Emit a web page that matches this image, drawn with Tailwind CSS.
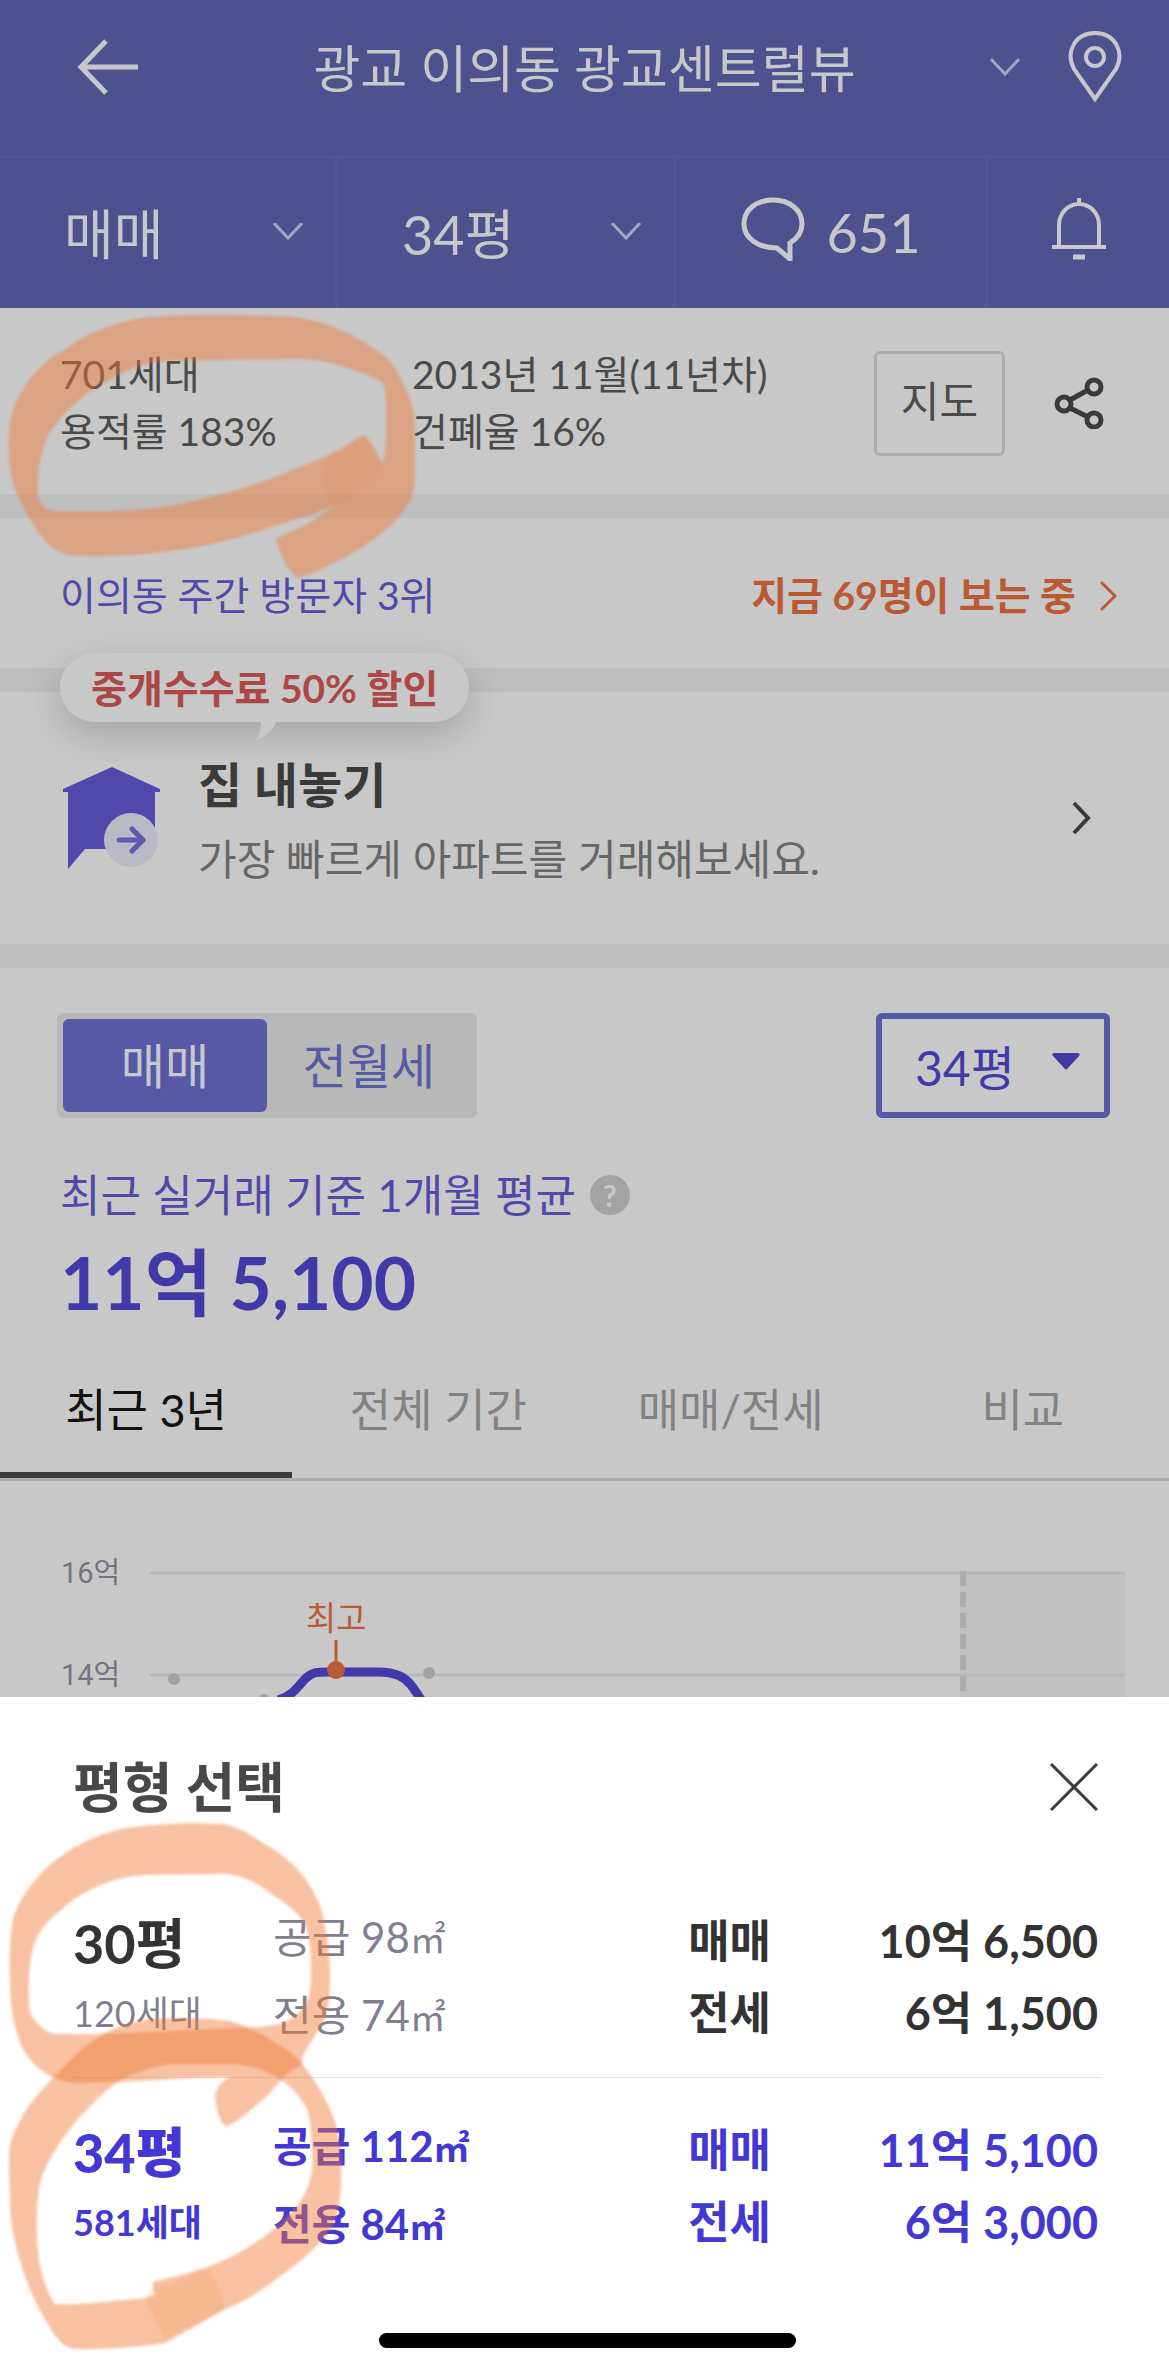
<!DOCTYPE html>
<html lang="ko">
<head>
<meta charset="utf-8">
<meta name="viewport" content="width=device-width, initial-scale=1">
<title>광교센트럴뷰</title>
<script src="https://cdn.jsdelivr.net/npm/@tailwindcss/browser@4"></script>
</head>
<body class="relative bg-white font-['Lato','Noto_Sans_CJK_KR',sans-serif] text-[39px] text-[#4a4a4a]">

<!-- App header -->
<header class="bg-[#4d518d] text-[#c8c8cc]">
  <div class="flex h-[158px] items-center border-b-3 border-[#535793] pr-[47px] pb-[22px] pl-[76px]">
    <a href="#" aria-label="뒤로" class="w-16">
      <svg class="h-[56px] w-[64px]" viewBox="0 0 64 56" fill="none" stroke="currentColor" stroke-width="5"><path d="M30 2 5 28l25 26M5 28h57"/></svg>
    </a>
    <button type="button" class="flex flex-1 items-center">
      <span class="flex-1 pt-1 pl-[39px] text-center text-[51px] leading-[76px]">광교 이의동 광교센트럴뷰</span>
      <svg class="h-[20px] w-[30px]" viewBox="0 0 30 20" fill="none" stroke="#a3a5c6" stroke-width="3"><path d="m1 2 14 15L29 2"/></svg>
    </button>
    <a href="#" aria-label="지도 위치" class="ml-[48px]">
      <svg class="h-[74px] w-[54px]" viewBox="0 0 54 74" fill="none" stroke="currentColor" stroke-width="4"><path d="M27 69 6 39C-3 22 7 3 27 3s30 19 21 36Z"/><circle cx="27" cy="27" r="9"/></svg>
    </a>
  </div>
  <div class="grid h-[150px] grid-cols-[338fr_338fr_312fr_181fr] divide-x-3 divide-[#535793] text-[54px]">
    <label class="flex items-center pr-[32px] pl-[64px]">
      <select aria-label="거래 유형" class="w-full flex-1 appearance-none pt-1 leading-[80px] outline-none"><option>매매</option><option>전월세</option></select>
      <svg class="h-[20px] w-[30px]" viewBox="0 0 30 20" fill="none" stroke="#a3a5c6" stroke-width="3"><path d="m1 0 14 15L29 0"/></svg>
    </label>
    <label class="flex items-center pr-[32px] pl-[64px]">
      <select aria-label="평형" class="w-full flex-1 appearance-none pt-1 leading-[80px] outline-none"><option>34평</option><option>30평</option></select>
      <svg class="h-[20px] w-[30px]" viewBox="0 0 30 20" fill="none" stroke="#a3a5c6" stroke-width="3"><path d="m1 0 14 15L29 0"/></svg>
    </label>
    <a href="#" class="flex items-center justify-center gap-[22px]">
      <svg class="mb-2 h-[64px] w-[64px]" viewBox="0 0 64 64" fill="none" stroke="currentColor" stroke-width="5"><path d="M32 3C15 3 3 13 3 27s14 24 33 24l13 11V46c8-5 12-11 12-19C61 13 49 3 32 3Z"/></svg>
      <span class="leading-[80px]">651</span>
    </a>
    <button type="button" aria-label="알림" class="flex items-center justify-center">
      <svg class="mb-2 h-[62px] w-[54px]" viewBox="0 0 54 62" fill="none" stroke="currentColor" stroke-width="4"><path d="M27 0v7M7 48V27a20 21 0 0 1 40 0v21M0 49h54"/><path stroke-width="5" d="M21 59h12"/></svg>
    </button>
  </div>
</header>

<main class="bg-[#c8c8c8]">
  <!-- Complex summary -->
  <section class="flex h-[186px] items-center pt-[4px] pr-[65px] pl-[60px]">
    <p class="w-[352px] leading-[57px]">701세대<br>용적률 183%</p>
    <p class="flex-1 leading-[57px]">2013년 11월(11년차)<br>건폐율 16%</p>
    <button type="button" class="h-[105px] w-[131px] rounded-md border-3 border-[#adadad] pb-1 text-[42px]">지도</button>
    <button type="button" aria-label="공유" class="ml-[49px]">
      <svg class="h-[52px] w-[50px]" viewBox="0 0 50 52" fill="none" stroke="#3a3a3a" stroke-width="5"><circle cx="10" cy="27" r="7"/><circle cx="40" cy="10" r="7"/><circle cx="40" cy="43" r="7"/><path d="m16 23 18-10M16 31l18 9"/></svg>
    </button>
  </section>

  <!-- Visitors -->
  <section class="flex h-[198px] items-center justify-between border-y-24 border-[#bebebe] pt-[5px] pr-[52px] pl-[60px]">
    <p class="text-[#5248a8]">이의동 주간 방문자 3위</p>
    <a href="#" class="flex items-center gap-[24px] font-bold text-[#b95a35]">지금 69명이 보는 중
      <svg class="h-[30px] w-[17px]" viewBox="0 0 17 30" fill="none" stroke="currentColor" stroke-width="3"><path d="m1 1 14 14L1 29"/></svg>
    </a>
  </section>

  <!-- Sell banner -->
  <section class="relative h-[276px] border-b-24 border-[#bebebe]">
    <div class="absolute -top-[39px] left-[60px] z-10 rounded-full bg-[#c8c8c8] px-[31px] pt-[2px] text-[39px] leading-[67px] font-bold text-[#ab4845] shadow-[0_12px_36px_rgb(0_0_0/0.18)]">중개수수료 50% 할인
      <svg class="absolute top-[68px] left-[196px] h-[20px] w-[21px]" viewBox="0 0 21 20" fill="#c8c8c8"><path d="M5 0h15C19 8 10 16 0 19 4 14 5 7 5 0Z"/></svg>
    </div>
    <a href="#" class="flex items-center pt-[56px] pr-[78px] pl-[62px]">
      <svg class="-mt-[6px] h-[104px] w-[98px]" viewBox="0 0 98 104"><path fill="#5248ab" d="M50 0 98 22v3h-5v57H23L6 102V25H1v-3Z"/><circle cx="69" cy="73" r="27" fill="#babac6"/><path fill="none" stroke="#5f57b0" stroke-width="5" stroke-linecap="round" stroke-linejoin="round" d="M57 73h24M70 62l11 11-11 11"/></svg>
      <div class="ml-[38px] flex-1">
        <h2 class="text-[48px] leading-[74px] font-bold text-[#3a3a3a]">집 내놓기</h2>
        <p class="text-[42px] leading-[74px] text-[#666]">가장 빠르게 아파트를 거래해보세요.</p>
      </div>
      <svg class="mb-[8px] h-[34px] w-[19px]" viewBox="0 0 19 34" fill="none" stroke="#3a3a3a" stroke-width="4"><path d="m2 2 14 15L2 32"/></svg>
    </a>
  </section>

  <!-- Price -->
  <section class="pt-[45px]">
    <div class="flex h-[105px] justify-between pr-[59px] pl-[57px] text-[48px]">
      <div class="flex w-[420px] rounded-md bg-[#b8b8b8] p-[6px]">
        <button type="button" class="w-[204px] rounded-md bg-[#565aa6] text-[#c8c8cc]">매매</button>
        <button type="button" class="flex-1 text-[#565aa3]">전월세</button>
      </div>
      <label class="flex w-[234px] items-center rounded-md border-6 border-[#565aa6] pr-[24px] pl-[33px]">
        <select aria-label="면적" class="w-full flex-1 appearance-none pt-1 leading-[80px] text-[#4239a8] outline-none"><option>34평</option><option>30평</option></select>
        <svg class="mb-2 h-[17px] w-[28px]" viewBox="0 0 28 17" fill="#4239a8"><path d="M2 0h24q3 1 1 3L15 16q-1 1-2 0L1 3Q-1 1 2 0Z"/></svg>
      </label>
    </div>
    <div class="mt-[44px] flex items-center gap-[14px] px-[60px]">
      <h3 class="text-[44px] leading-[66px] text-[#5248a8]">최근 실거래 기준 1개월 평균</h3>
      <button type="button" aria-label="도움말" class="size-[40px] rounded-full bg-[#a3a3a3] text-[30px] leading-[40px] font-bold text-[#c8c8c8]">?</button>
    </div>
    <p class="px-[60px] text-[73px] leading-[108px] font-bold text-[#4239a8]">11억 5,100</p>

    <nav class="mt-[6px] grid h-[139px] grid-cols-4 border-b-3 border-[#aeaeae] text-[45px] text-[#828282]">
      <a href="#" class="border-b-6 border-[#3b3c3a] pt-[35px] text-center leading-[66px] text-[#111]">최근 3년</a>
      <a href="#" class="pt-[35px] text-center leading-[66px]">전체 기간</a>
      <a href="#" class="pt-[35px] text-center leading-[66px]">매매/전세</a>
      <a href="#" class="pt-[35px] text-center leading-[66px]">비교</a>
    </nav>

    <!-- Price chart, cut off by the sheet -->
    <svg class="block w-full" viewBox="0 0 1169 216" role="img" aria-label="실거래가 차트">
      <rect x="960" y="91" width="165" height="125" fill="#c0c0c0"/>
      <path stroke="#b8b8b8" stroke-width="3" d="M150 92h975M150 194h975"/>
      <path stroke="#adadad" stroke-width="6" stroke-dasharray="15 6" d="M963 90v126"/>
      <g fill="#74747f" class="font-['Roboto','Noto_Sans_CJK_KR',sans-serif] text-[29px]"><text x="61" y="102">16억</text><text x="61" y="204">14억</text></g>
      <g fill="#a3a3a3"><circle cx="174" cy="198" r="6"/><circle cx="264" cy="219" r="6"/><circle cx="429" cy="192" r="6"/></g>
      <path fill="none" stroke="#4239a8" stroke-width="9" d="M278 219c15-4 20-14 28-22 8-7 12-6 30-6h41c21 0 28 6 34 13 5 6 7 11 12 17"/>
      <path stroke="#b95a35" stroke-width="3" d="M336 159v30"/>
      <circle cx="336" cy="189" r="9" fill="#b95a35"/>
      <text x="336" y="149" text-anchor="middle" fill="#b95a35" class="text-[33px]">최고</text>
    </svg>
  </section>
</main>

<!-- Size picker sheet -->
<section class="bg-white pt-[50px] pr-[67px] pl-[73px]" aria-labelledby="sheet-title">
  <div class="flex items-center justify-between pr-1">
    <h2 id="sheet-title" class="pt-[2px] text-[54px] leading-[78px] font-bold text-[#484848]">평형 선택</h2>
    <button type="button" aria-label="닫기"><svg class="h-[48px] w-[48px]" viewBox="0 0 48 48" fill="none" stroke="#3a3a3a" stroke-width="3"><path d="m1 1 46 46M47 1 1 47"/></svg></button>
  </div>
  <ul class="mt-[46px] divide-y divide-[#e2e2e2]">
    <li>
      <button type="button" class="grid h-[204px] w-full grid-cols-[200px_1fr_auto_331px] items-start pt-[26px] text-left text-[#333]">
        <span class="pt-[9px]"><strong class="block text-[54px] leading-[72px]">30평</strong><span class="block text-[36px] leading-[66px] text-[#7f7f90]">120세대</span></span>
        <span class="text-[42px] leading-[76px] text-[#7f7f90]">공급 98<span class="text-[36px]">㎡</span><br>전용 74<span class="text-[36px]">㎡</span></span>
        <span class="pt-[6px] text-[45px] leading-[72px] font-bold">매매<br>전세</span>
        <span class="pt-[6px] pr-1 text-right text-[45px] leading-[72px] font-bold">10억 6,500<br>6억 1,500</span>
      </button>
    </li>
    <li>
      <button type="button" aria-pressed="true" class="grid h-[210px] w-full grid-cols-[200px_1fr_auto_331px] items-start pt-[30px] text-left font-bold text-[#4338d4]">
        <span class="pt-[9px]"><strong class="block text-[54px] leading-[72px]">34평</strong><span class="block text-[36px] leading-[66px]">581세대</span></span>
        <span class="text-[42px] leading-[76px]">공급 112<span class="text-[36px]">㎡</span><br>전용 84<span class="text-[36px]">㎡</span></span>
        <span class="pt-[6px] text-[45px] leading-[72px]">매매<br>전세</span>
        <span class="pt-[6px] pr-1 text-right text-[45px] leading-[72px]">11억 5,100<br>6억 3,000</span>
      </button>
    </li>
  </ul>
  <div class="flex justify-center pt-[45px] pb-[24px]"><span class="h-[15px] w-[417px] rounded-full bg-black"></span></div>
</section>

<!-- Highlighter marks -->
<svg class="pointer-events-none absolute top-0 left-0 w-full" viewBox="0 0 1169 2372" fill="#ee7832" fill-opacity="0.46" fill-rule="evenodd" aria-hidden="true">
  <defs><filter id="soft" x="-5%" y="-5%" width="110%" height="110%"><feGaussianBlur stdDeviation="1.6"/></filter></defs>
  <g filter="url(#soft)">
    <path d="M165 316C200 314 250 315 283 316 315 318 340 328 360 340 378 350 390 358 398 373 409 394 415 410 415 425V483C413 500 403 514 390 526 365 549 325 570 298 578 288 572 280 555 276 538 298 530 322 516 333 506 315 514 292 521 268 528 240 538 215 544 191 548 150 555 110 557 77 556 60 555 50 547 43 538 28 518 20 502 14 486 8 468 8 445 9 430 11 410 18 397 27 383 39 366 52 356 69 347 90 332 120 318 165 316ZM161 361C147 363 132 368 119 375 106 382 96 387 88 393 68 408 54 424 46 440 38 458 38 480 38 498 42 508 50 511 57 511 95 511 125 512 153 508 180 505 205 499 230 492 265 482 300 467 329 455 343 449 355 439 364 435 370 440 376 450 382 463 386 455 386 440 386 430 386 410 387 397 383 383 370 375 357 371 344 367 330 362 315 359 299 359Z"/>
    <path d="M329 455 364 435 384 470C375 483 355 496 333 506L320 480Z" fill-opacity="0.08"/>
    <path d="M153 1825C175 1823 200 1823 222 1824 240 1826 255 1838 268 1846 285 1856 298 1868 306 1880 317 1895 323 1910 325 1927 329 1945 330 1960 330 1979 330 1998 328 2015 321 2026L302 2057C305 2062 300 2066 292 2070 283 2077 273 2090 264 2099 250 2110 238 2122 226 2127 218 2120 215 2105 215 2094 218 2085 224 2080 230 2077L191 2078C150 2080 110 2083 77 2083 62 2082 50 2077 42 2071 29 2060 22 2050 19 2039 12 2020 10 2000 10 1979 9 1955 10 1935 13 1919 20 1895 37 1875 57 1859 73 1847 90 1838 107 1833 122 1828 138 1826 153 1825ZM145 1875C128 1876 112 1880 99 1886 84 1892 72 1900 61 1910 45 1923 36 1935 33 1949 29 1965 28 1982 29 1996 29 2007 29 2014 34 2019 41 2029 48 2033 57 2034 110 2035 165 2031 214 2029 240 2028 262 2028 279 2024 290 2020 298 2015 302 2009 309 2000 311 1990 311 1979 311 1960 311 1940 306 1927 300 1914 290 1906 276 1897 262 1886 245 1875 226 1874Z"/>
    <path d="M153 2019C180 2017 205 2018 230 2021 248 2026 264 2035 276 2043 289 2051 299 2058 306 2069 322 2090 332 2110 337 2129 341 2150 342 2165 341 2184 340 2205 337 2220 329 2231 318 2247 300 2262 283 2274 265 2288 245 2302 226 2309L165 2343C135 2348 100 2349 73 2349 65 2347 59 2341 54 2334 40 2312 30 2293 23 2270 14 2243 9 2220 10 2193 9 2170 8 2155 11 2141 18 2120 30 2103 42 2090 58 2073 75 2053 96 2039 113 2027 132 2021 153 2019ZM168 2064C153 2067 139 2071 126 2077 107 2087 92 2104 77 2120 63 2138 50 2156 42 2176 37 2193 37 2210 37 2227 37 2247 39 2262 42 2274 46 2286 50 2298 55 2304 85 2305 120 2300 145 2298 155 2296 158 2293 153 2291 153 2286 152 2283 155 2281 175 2277 194 2272 210 2266 233 2257 257 2244 276 2227 292 2213 306 2198 310 2180 313 2170 313 2160 312 2150 311 2132 311 2117 306 2107 296 2090 283 2079 268 2073 256 2067 244 2064 230 2064Z"/>
    <path d="M153 2289C172 2285 194 2272 208 2268 216 2278 222 2294 224 2309L165 2340 145 2298Z" fill-opacity="0.14"/>
  </g>
</svg>
</body>
</html>
